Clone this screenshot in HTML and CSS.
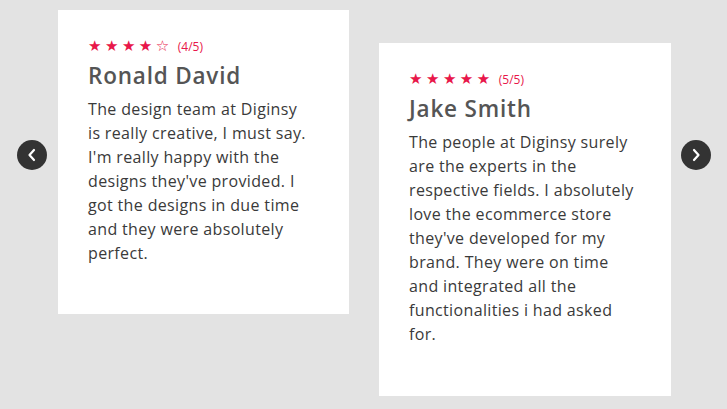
FILE: index.html
```html
<!DOCTYPE html>
<html lang="en">
<head>
<meta charset="utf-8">
<title>Testimonials</title>
<link rel="stylesheet" href="styles.css">
</head>
<body>
<section class="slider">
  <div class="track">
    <article class="card">
      <div class="rating">
        <span class="stars">★★★★<span class="empty">☆</span></span>
        <span class="score">(4/5)</span>
      </div>
      <h3 class="name">Ronald David</h3>
      <p class="quote">The design team at Diginsy<br>is really creative, I must say. I'm really happy with the designs they've provided. I got the designs in due time and they were absolutely perfect.</p>
    </article>
    <article class="card card-offset">
      <div class="rating">
        <span class="stars">★★★★★</span>
        <span class="score">(5/5)</span>
      </div>
      <h3 class="name">Jake Smith</h3>
      <p class="quote">The people at Diginsy surely are the experts in the respective fields. I absolutely love the ecommerce store they've developed for my brand. They were on time and integrated all the functionalities i had asked for.</p>
    </article>
  </div>
  <button class="arrow arrow-prev" aria-label="Previous">
    <svg width="12" height="14" viewBox="0 0 12 14"><path d="M8 2 L3.5 7 L8 12" fill="none" stroke="#fff" stroke-width="2.2" stroke-linecap="round" stroke-linejoin="round"/></svg>
  </button>
  <button class="arrow arrow-next" aria-label="Next">
    <svg width="12" height="14" viewBox="0 0 12 14"><path d="M4 2 L8.5 7 L4 12" fill="none" stroke="#fff" stroke-width="2.2" stroke-linecap="round" stroke-linejoin="round"/></svg>
  </button>
</section>
</body>
</html>
```
FILE: styles.css
```css
html, body {
  margin: 0;
  padding: 0;
}
body {
  background: #e3e3e3;
  font-family: "Open Sans", "Noto Sans", sans-serif;
  width: 727px;
  height: 409px;
  overflow: hidden;
}
.slider {
  position: relative;
  height: 409px;
}
.track {
  display: flex;
  align-items: flex-start;
  gap: 30px;
  padding: 10px 0 0 58px;
}
.card {
  background: #fff;
  width: 291px;
  box-sizing: border-box;
  padding: 29px 30px 30px 30px;
}
.card-offset {
  margin-top: 33px;
  width: 292px;
  padding-bottom: 31px;
}
.rating {
  display: flex;
  align-items: center;
  height: 14px;
  color: #e8174a;
}
.stars {
  font-size: 15px;
  letter-spacing: 3.5px;
  line-height: 14px;
  font-family: "DejaVu Sans", sans-serif;
}
.score {
  font-size: 12px;
  margin-left: 5px;
}
.name {
  margin: 9px 0 0 0;
  font-size: 22.5px;
  line-height: 28px;
  font-weight: 600;
  letter-spacing: 0.8px;
  color: #555;
}
.quote {
  margin: 7px 0 19px 0;
  font-size: 16px;
  line-height: 24px;
  letter-spacing: 0.35px;
  color: #3a3a3a;
}
.arrow {
  position: absolute;
  top: 140px;
  width: 30px;
  height: 30px;
  border: none;
  border-radius: 50%;
  background: #333;
  padding: 0;
  display: flex;
  align-items: center;
  justify-content: center;
}
.arrow-prev {
  left: 17px;
}
.arrow-next {
  left: 681px;
}
```
